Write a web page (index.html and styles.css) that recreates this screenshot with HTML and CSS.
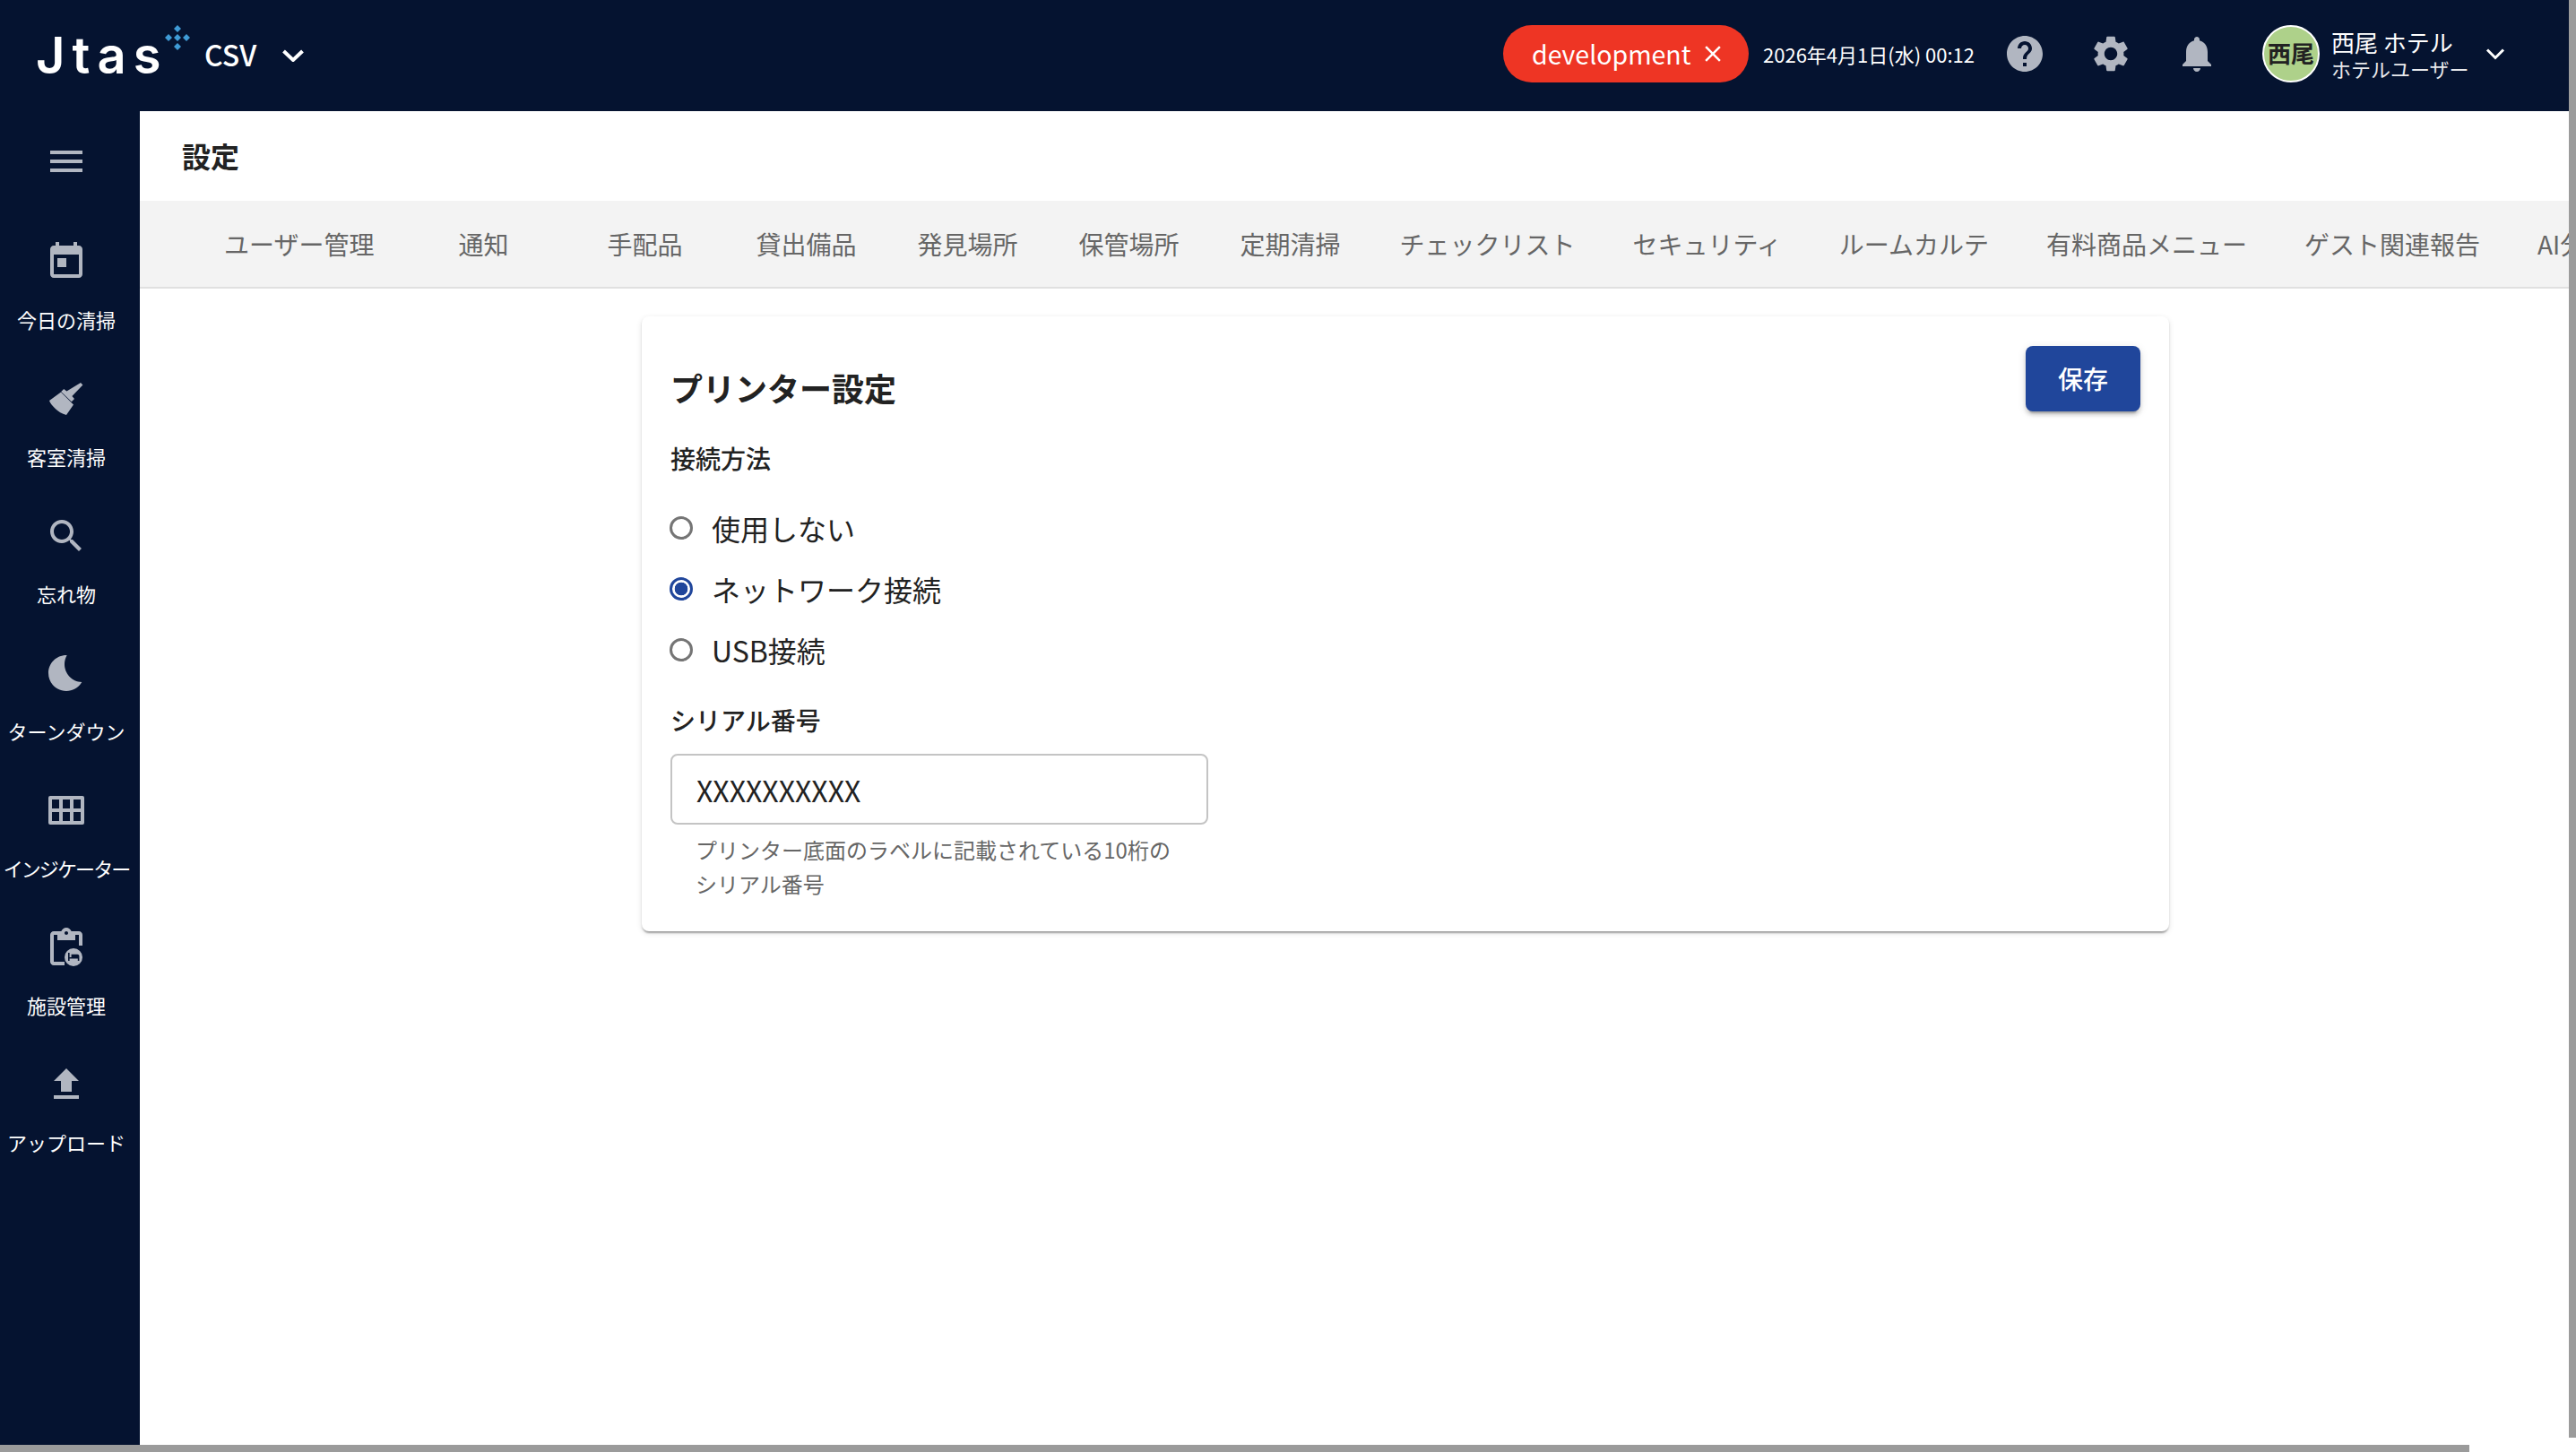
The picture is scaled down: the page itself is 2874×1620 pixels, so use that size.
FILE: index.html
```html
<!DOCTYPE html>
<html lang="ja">
<head>
<meta charset="utf-8">
<title>設定</title>
<link rel="stylesheet" href="styles.css">
</head>
<body>
<div class="app">
  <header class="topbar">
    <div class="logo">
      <span class="logo-text">Jtas</span>
      <svg class="logo-spark" viewBox="0 0 28 28"><path d="M14 0l4 4-4 4-4-4zM4 10l4 4-4 4-4-4zM14 10l4 4-4 4-4-4zM24 10l4 4-4 4-4-4zM14 20l4 4-4 4-4-4z"/></svg>
    </div>
    <div class="scope">CSV</div>
    <svg class="scope-chevron" viewBox="0 0 24 14"><path d="M1.5 2l10.5 10L22.500 2"/></svg>
    <div class="chip">
      <span class="chip-label">development</span>
      <svg class="chip-close" viewBox="0 0 24 24"><path d="M19 6.410 17.590 5 12 10.590 6.410 5 5 6.410 10.590 12 5 17.590 6.410 19 12 13.410 17.590 19 19 17.590 13.410 12z"/></svg>
    </div>
    <div class="clock">2026年4月1日(水) 00:12</div>
    <button class="top-icon"><svg class="icon" viewBox="0 0 24 24"><path d="M12 2C6.480 2 2 6.480 2 12s4.480 10 10 10 10-4.480 10-10S17.520 2 12 2zm1 17h-2v-2h2v2zm2.070-7.750l-.9.920C13.450 12.900 13 13.500 13 15h-2v-.5c0-1.100.450-2.100 1.170-2.830l1.240-1.260c.370-.360.590-.860.590-1.410 0-1.100-.9-2-2-2s-2 .9-2 2H8c0-2.210 1.790-4 4-4s4 1.790 4 4c0 .880-.360 1.680-.930 2.250z"/></svg></button>
    <button class="top-icon"><svg class="icon" viewBox="0 0 24 24"><path d="M19.140 12.940c.040-.3.060-.610.060-.940 0-.320-.020-.640-.070-.940l2.030-1.580c.180-.140.230-.410.120-.610l-1.920-3.320c-.120-.220-.370-.290-.590-.220l-2.390.960c-.5-.380-1.030-.7-1.620-.940l-.360-2.540c-.040-.240-.240-.410-.480-.410h-3.840c-.240 0-.430.170-.47.410l-.360 2.540c-.590.240-1.130.570-1.620.940l-2.390-.960c-.220-.080-.470 0-.590.220L2.740 8.870c-.120.210-.080.470.120.610l2.030 1.580c-.050.3-.090.630-.090.940s.020.640.070.940l-2.030 1.580c-.180.140-.230.410-.12.610l1.920 3.320c.120.220.370.290.590.220l2.390-.960c.5.380 1.030.7 1.620.940l.360 2.540c.050.240.240.410.480.410h3.840c.240 0 .440-.170.470-.410l.360-2.540c.590-.240 1.130-.560 1.620-.940l2.390.960c.220.080.470 0 .590-.220l1.920-3.320c.120-.220.070-.470-.120-.610l-2.010-1.580zM12 15.600c-1.980 0-3.600-1.620-3.600-3.600s1.620-3.600 3.600-3.600 3.600 1.620 3.600 3.600-1.620 3.600-3.600 3.600z"/></svg></button>
    <button class="top-icon"><svg class="icon" viewBox="0 0 24 24"><path d="M12 22c1.100 0 2-.9 2-2h-4c0 1.100.890 2 2 2zm6-6v-5c0-3.070-1.640-5.640-4.500-6.320V4c0-.830-.670-1.500-1.500-1.500s-1.500.670-1.500 1.500v.680C7.630 5.360 6 7.920 6 11v5l-2 2v1h16v-1l-2-2z"/></svg></button>
    <div class="avatar">西尾</div>
    <div class="user">
      <div class="user-name">西尾 ホテル</div>
      <div class="user-role">ホテルユーザー</div>
    </div>
    <svg class="user-chevron" viewBox="0 0 24 14"><path d="M3 2.500l9 9 9-9"/></svg>
  </header>

  <div class="body">
    <nav class="sidebar">
      <svg class="icon menu-icon" viewBox="0 0 24 24"><path d="M3 18h18v-2H3v2zm0-5h18v-2H3v2zm0-7v2h18V6H3z"/></svg>
      <ul class="nav-list">
        <li class="nav-item">
          <svg class="icon" viewBox="0 0 24 24"><path d="M19 3h-1V1h-2v2H8V1H6v2H5c-1.110 0-1.990.9-1.990 2L3 19c0 1.100.890 2 2 2h14c1.100 0 2-.9 2-2V5c0-1.100-.9-2-2-2zm0 16H5V8h14v11zM7 10h5v5H7z"/></svg>
          <span class="nav-label">今日の清掃</span>
        </li>
        <li class="nav-item">
          <svg class="icon" viewBox="0 0 24 24"><path d="M20 3l1.200 1.200-6 6.300 1.300 1.500-1.600 1.600-5.800-5.600 1.500-1.500 1.600 1.200zM9 8.200l7 7-4 5.800c-2.500-.7-4.500-2-6-3.400C4.300 16 3 14.500 2.500 13z"/></svg>
          <span class="nav-label">客室清掃</span>
        </li>
        <li class="nav-item">
          <svg class="icon" viewBox="0 0 24 24"><path d="M15.500 14h-.790l-.280-.270C15.410 12.590 16 11.110 16 9.500 16 5.910 13.090 3 9.500 3S3 5.910 3 9.500 5.910 16 9.500 16c1.610 0 3.090-.590 4.230-1.570l.270.280v.790l5 4.990L20.490 19l-4.990-5zm-6 0C7.010 14 5 11.990 5 9.500S7.010 5 9.500 5 14 7.010 14 9.500 11.990 14 9.500 14z"/></svg>
          <span class="nav-label">忘れ物</span>
        </li>
        <li class="nav-item">
          <svg class="icon" viewBox="0 0 24 24"><path d="M12.340 2.020C6.590 1.820 2 6.420 2 12c0 5.520 4.480 10 10 10 3.710 0 6.930-2.020 8.660-5.020-7.510-.250-12.090-8.430-8.320-14.960z"/></svg>
          <span class="nav-label">ターンダウン</span>
        </li>
        <li class="nav-item">
          <svg class="icon" viewBox="0 0 24 24"><path fill-rule="evenodd" d="M3 4h18a1 1 0 0 1 1 1v14a1 1 0 0 1-1 1H3a1 1 0 0 1-1-1V5a1 1 0 0 1 1-1zM4 6v5h4V6zM10 6v5h4V6zM16 6v5h4V6zM4 13v5h4v-5zM10 13v5h4v-5zM16 13v5h4v-5z"/></svg>
          <span class="nav-label nav-label-tight">インジケーター</span>
        </li>
        <li class="nav-item">
          <svg class="icon" viewBox="0 0 24 24"><path d="M19 3h-4.180C14.400 1.840 13.300 1 12 1s-2.400.840-2.820 2H5c-1.100 0-2 .9-2 2v15c0 1.100.9 2 2 2h6v-2H5V5h2v3h10V5h2v6h2V5c0-1.100-.9-2-2-2zm-7 2c-.550 0-1-.450-1-1s.450-1 1-1 1 .450 1 1-.450 1-1 1z"/><path fill-rule="evenodd" d="M16 12.500a5 5 0 1 1 0 10 5 5 0 0 1 0-10zM13 15v4.500h.8v-1.200h4.600v1.200h.8v-2.600c0-.6-.5-1-1-1h-3.400v1.600h-1V15z"/></svg>
          <span class="nav-label">施設管理</span>
        </li>
        <li class="nav-item">
          <svg class="icon" viewBox="0 0 24 24"><path d="M9 16h6v-6h4l-7-7-7 7h4zm-4 2h14v2H5z"/></svg>
          <span class="nav-label">アップロード</span>
        </li>
      </ul>
    </nav>

    <main class="main">
      <h1 class="page-title">設定</h1>
      <div class="tabs">
        <a class="tab">ユーザー管理</a>
        <a class="tab">通知</a>
        <a class="tab">手配品</a>
        <a class="tab">貸出備品</a>
        <a class="tab">発見場所</a>
        <a class="tab">保管場所</a>
        <a class="tab">定期清掃</a>
        <a class="tab">チェックリスト</a>
        <a class="tab">セキュリティ</a>
        <a class="tab">ルームカルテ</a>
        <a class="tab">有料商品メニュー</a>
        <a class="tab">ゲスト関連報告</a>
        <a class="tab">AI分析設定</a>
      </div>
      <div class="content">
        <section class="card">
          <div class="card-head">
            <h2 class="card-title">プリンター設定</h2>
            <button class="save">保存</button>
          </div>
          <div class="field-label method-label">接続方法</div>
          <div class="radios">
            <label class="radio-row"><input class="radio" type="radio" name="m"><span>使用しない</span></label>
            <label class="radio-row"><input class="radio" type="radio" name="m" checked><span>ネットワーク接続</span></label>
            <label class="radio-row"><input class="radio" type="radio" name="m"><span>USB接続</span></label>
          </div>
          <div class="field-label serial-label">シリアル番号</div>
          <input class="text-input" type="text" value="XXXXXXXXXX">
          <p class="helper">プリンター底面のラベルに記載されている10桁のシリアル番号</p>
        </section>
      </div>
    </main>
  </div>
  <div class="scroll-v"></div>
  <div class="scroll-h"></div>
</div>
</body>
</html>
```
FILE: styles.css
```css
* { box-sizing: border-box; }
html, body { margin: 0; padding: 0; background: #fff; overflow: hidden; }
body {
  font-family: "Noto Sans CJK JP", "Noto Sans", sans-serif;
  color: #222;
}
.app { position: relative; width: 2874px; height: 1620px; overflow: hidden; }

.topbar {
  width: 2866px;
  height: 124px;
  background: #051330;
  color: #fff;
  display: flex;
  align-items: center;
  padding: 0 70px 4px 42px;
}
.logo { position: relative; width: 186px; height: 120px; flex: none; }
.logo-text {
  position: absolute;
  left: -2px;
  top: 22px;
  font-family: Inter, sans-serif;
  font-weight: 600;
  font-size: 56px;
  line-height: 80px;
  letter-spacing: 8px;
  color: #fff;
}
.logo-spark { position: absolute; left: 142px; top: 28px; width: 28px; height: 28px; fill: #3f9bd6; }
.scope { font-size: 32px; font-weight: 500; line-height: 48px; width: 87px; flex: none; }
.scope-chevron { width: 24px; height: 14px; margin-top: 4px; fill: none; stroke: #fff; stroke-width: 4px; flex: none; }
.chip {
  margin-left: auto;
  width: 274px;
  height: 64px;
  border-radius: 32px;
  background: #ee3524;
  display: flex;
  align-items: center;
  padding-left: 32px;
  flex: none;
}
.chip-label { font-size: 28.500px; line-height: 40px; }
.chip-close { width: 30px; height: 30px; fill: #fff; margin-left: 10px; }
.clock { margin-left: 16px; width: 244px; font-size: 22px; line-height: 32px; white-space: nowrap; flex: none; }
.top-icon {
  width: 96px;
  height: 96px;
  padding: 0;
  border: 0;
  background: none;
  color: #b1b6c1;
  display: flex;
  align-items: center;
  justify-content: center;
  flex: none;
}
.icon { width: 48px; height: 48px; fill: currentColor; display: block; flex: none; }
.avatar {
  margin-left: 25px;
  width: 64px;
  height: 64px;
  border-radius: 50%;
  border: 2px solid #fff;
  background: #aed18a;
  color: #222;
  font-size: 26px;
  font-weight: 700;
  line-height: 58px;
  text-align: center;
  white-space: nowrap;
  flex: none;
}
.user { margin-left: 13px; width: 160px; flex: none; }
.user-name { font-size: 26px; line-height: 32px; white-space: nowrap; }
.user-role { font-size: 22px; line-height: 26px; white-space: nowrap; color: #e8e9ec; }
.user-chevron { margin-left: 11px; width: 24px; height: 14px; fill: none; stroke: #fff; stroke-width: 3px; flex: none; }

.body { display: flex; width: 2866px; height: 1488px; }
.sidebar {
  width: 156px;
  flex: none;
  background: #051330;
  color: #b1b6c1;
  padding: 32px 8px 0 0;
  display: flex;
  flex-direction: column;
  align-items: center;
}
.nav-list { list-style: none; margin: 64px 0 0; padding: 0; width: 148px; display: flex; flex-direction: column; gap: 49px; }
.nav-item { display: flex; flex-direction: column; align-items: center; }
.nav-label { margin-top: 24px; font-size: 22px; line-height: 32px; color: #fff; white-space: nowrap; }
.nav-label-tight { letter-spacing: -1.900px; }

.main { flex: 1; min-width: 0; overflow: hidden; }
.page-title {
  margin: 0;
  height: 100px;
  padding-left: 47px;
  font-size: 32px;
  font-weight: 700;
  line-height: 98px;
  color: #222;
}
.tabs {
  display: flex;
  height: 98px;
  padding-left: 62px;
  background: #f3f3f3;
  border-bottom: 2px solid #e0e0e0;
  overflow: hidden;
}
.tab {
  min-width: 180px;
  padding: 0 32px;
  font-size: 28px;
  line-height: 96px;
  color: #666;
  text-align: center;
  white-space: nowrap;
  flex: none;
}
.content { padding: 31px 0 0 560px; }
.card {
  width: 1704px;
  padding: 33px 32px 34px;
  background: #fff;
  border-radius: 8px;
  box-shadow: 0 4px 2px -2px rgba(0,0,0,.2), 0 2px 2px 0 rgba(0,0,0,.14), 0 2px 6px 0 rgba(0,0,0,.12);
}
.card-head { display: flex; justify-content: space-between; align-items: flex-start; }
.card-title { margin: 22px 0 0; font-size: 36px; font-weight: 700; line-height: 48px; color: #222; }
.save {
  width: 128px;
  height: 73px;
  padding: 0 0 1px;
  border: 0;
  border-radius: 8px;
  background: #20469b;
  color: #fff;
  font: 500 28px/40px "Noto Sans CJK JP", sans-serif;
  box-shadow: 0 6px 2px -4px rgba(0,0,0,.2), 0 4px 4px 0 rgba(0,0,0,.14), 0 2px 10px 0 rgba(0,0,0,.12);
}
.field-label { font-size: 28px; font-weight: 500; line-height: 40px; color: #222; }
.method-label { margin-top: 32px; }
.radios { margin-top: 24px; display: flex; flex-direction: column; }
.radio-row { height: 68px; display: flex; align-items: center; gap: 21px; font-size: 32px; line-height: 48px; color: #222; }
.radio {
  appearance: none;
  width: 26px;
  height: 26px;
  margin: 0 0 0 -1px;
  border: 3px solid #757575;
  border-radius: 50%;
  background: #fff;
  flex: none;
}
.radio:checked { border-color: #20469b; background: radial-gradient(circle, #20469b 0 7px, #fff 7.6px); }
.serial-label { margin-top: 24px; }
.text-input {
  display: block;
  margin-top: 18px;
  width: 600px;
  height: 79px;
  padding: 0 27px;
  border: 2px solid #c4c4c4;
  border-radius: 8px;
  background: #fff;
  font: 400 32px/48px "Noto Sans CJK JP", sans-serif;
  color: #222;
  outline: 0;
}
.helper {
  margin: 9px 0 0;
  padding: 0 28px;
  width: 600px;
  font-size: 24px;
  line-height: 38px;
  color: #666;
}

.scroll-v { position: absolute; right: 0; top: 0; width: 8px; height: 1604px; background: #9b9b9b; }
.scroll-h { position: absolute; left: 0; bottom: 0; width: 2755px; height: 8px; background: #9b9b9b; }
```
